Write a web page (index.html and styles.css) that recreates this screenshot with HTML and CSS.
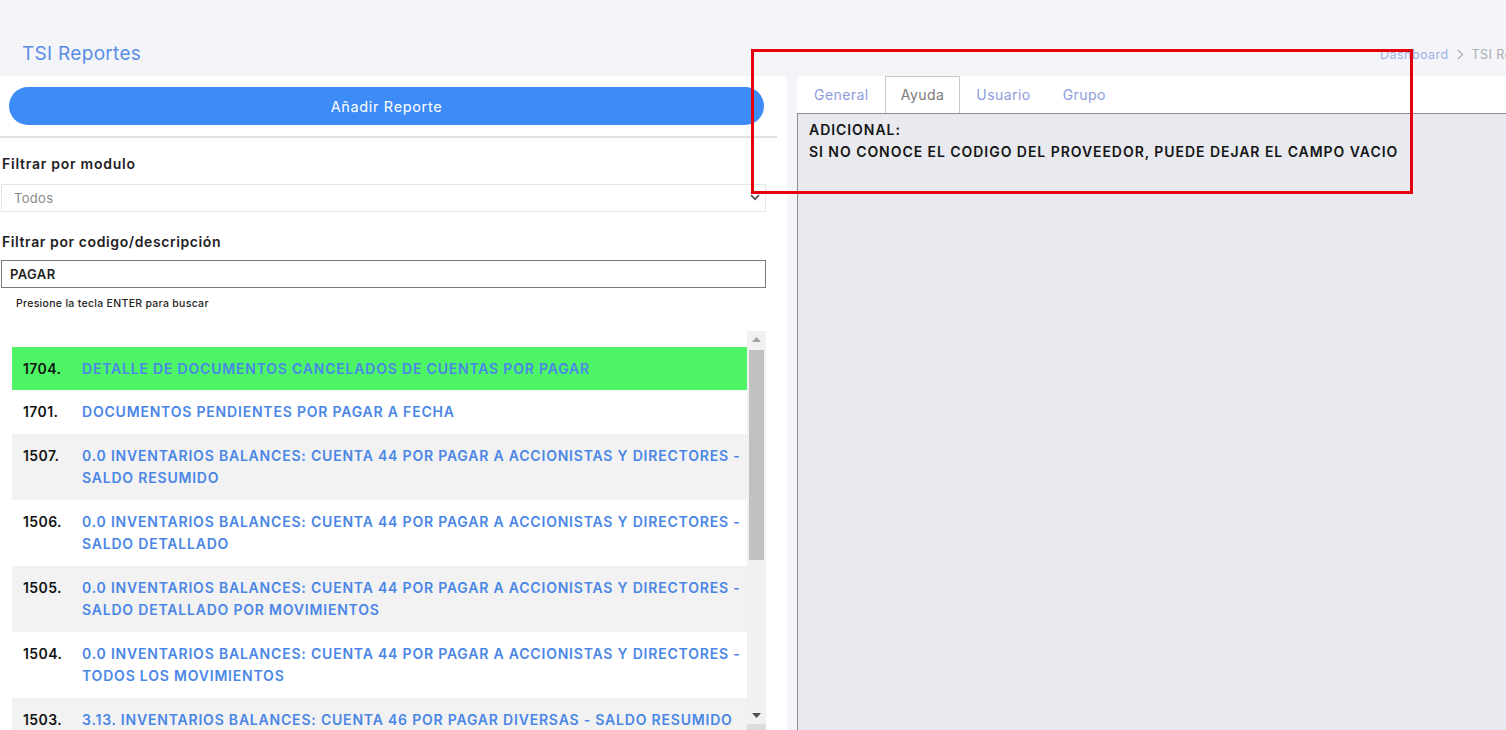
FILE: index.html
```html
<!DOCTYPE html>
<html lang="es">
<head>
<meta charset="utf-8">
<title>TSI Reportes</title>
<link rel="stylesheet" href="styles.css">
</head>
<body>
<div class="page">
  <header class="topbar">
    <h1 class="title">TSI Reportes</h1>
    <nav class="crumbs">
      <a class="crumb-link">Dashboard</a>
      <svg class="crumb-sep" width="7" height="11" viewBox="0 0 7 11"><path d="M1 1l4.5 4.5L1 10" fill="none" stroke="#a9abb3" stroke-width="1.2"/></svg>
      <span class="crumb-current">TSI Reportes</span>
    </nav>
  </header>
  <main class="main">
    <section class="left">
      <button class="add-btn" type="button">Añadir Reporte</button>
      <hr class="divider">
      <label class="field-label">Filtrar por modulo</label>
      <div class="select-wrap">
        <select class="select"><option>Todos</option></select>
        <svg class="chev" width="10" height="7" viewBox="0 0 10 7"><path d="M1 1.2l4 4 4-4" fill="none" stroke="#555" stroke-width="1.8"/></svg>
      </div>
      <label class="field-label field-label-2">Filtrar por codigo/descripción</label>
      <input class="search" type="text" value="PAGAR">
      <p class="hint">Presione la tecla ENTER para buscar</p>
      <div class="list-box">
        <ul class="list">
          <li class="item item-active"><span class="num">1704.</span><span class="name">DETALLE DE DOCUMENTOS CANCELADOS DE CUENTAS POR PAGAR</span></li>
          <li class="item"><span class="num">1701.</span><span class="name">DOCUMENTOS PENDIENTES POR PAGAR A FECHA</span></li>
          <li class="item item-alt"><span class="num">1507.</span><span class="name">0.0 INVENTARIOS BALANCES: CUENTA 44 POR PAGAR A ACCIONISTAS Y DIRECTORES - SALDO RESUMIDO</span></li>
          <li class="item"><span class="num">1506.</span><span class="name">0.0 INVENTARIOS BALANCES: CUENTA 44 POR PAGAR A ACCIONISTAS Y DIRECTORES - SALDO DETALLADO</span></li>
          <li class="item item-alt"><span class="num">1505.</span><span class="name">0.0 INVENTARIOS BALANCES: CUENTA 44 POR PAGAR A ACCIONISTAS Y DIRECTORES - SALDO DETALLADO POR MOVIMIENTOS</span></li>
          <li class="item"><span class="num">1504.</span><span class="name">0.0 INVENTARIOS BALANCES: CUENTA 44 POR PAGAR A ACCIONISTAS Y DIRECTORES - TODOS LOS MOVIMIENTOS</span></li>
          <li class="item item-alt"><span class="num">1503.</span><span class="name">3.13. INVENTARIOS BALANCES: CUENTA 46 POR PAGAR DIVERSAS - SALDO RESUMIDO</span></li>
        </ul>
        <div class="vscroll">
          <div class="vs-btn"><svg width="9" height="5" viewBox="0 0 9 5"><path d="M0 5L4.5 0 9 5z" fill="#a3a3a3"/></svg></div>
          <div class="vs-thumb"></div>
          <div class="vs-track"></div>
          <div class="vs-btn"><svg width="9" height="5" viewBox="0 0 9 5"><path d="M0 0h9L4.5 5z" fill="#505050"/></svg></div>
          <div class="vs-corner"></div>
        </div>
      </div>
    </section>
    <section class="right">
      <div class="tabs">
        <span class="tab">General</span>
        <span class="tab tab-active">Ayuda</span>
        <span class="tab">Usuario</span>
        <span class="tab">Grupo</span>
      </div>
      <div class="pane">
        <p class="pane-line">ADICIONAL:</p>
        <p class="pane-line">SI NO CONOCE EL CODIGO DEL PROVEEDOR, PUEDE DEJAR EL CAMPO VACIO</p>
      </div>
    </section>
  </main>
  <div class="annotation"></div>
</div>
</body>
</html>
```

FILE: styles.css
```css
html, body {
  margin: 0;
  padding: 0;
  height: 730px;
  overflow: hidden;
  background: #f4f5f9;
  font-family: Inter, "Open Sans", "Liberation Sans", sans-serif;
}

.page {
  position: relative;
  width: 1575px;
  height: 730px;
  display: flex;
  flex-direction: column;
}

.topbar {
  height: 76px;
  box-sizing: border-box;
  padding: 43px 22px 0 22px;
  display: flex;
  align-items: flex-start;
  flex-shrink: 0;
}

.title {
  margin: 0;
  font-size: 19px;
  font-weight: 400;
  line-height: 22px;
  letter-spacing: 0.3px;
  color: #5a8de6;
  flex: 1;
}

.crumbs {
  display: flex;
  align-items: center;
  gap: 8px;
  height: 22px;
  font-size: 12.5px;
  letter-spacing: 0.45px;
  color: #a9abb3;
}

.crumb-link {
  color: #9eaee6;
}

.main {
  flex: 1;
  display: flex;
  gap: 10px;
  min-height: 0;
}

.left {
  width: 787px;
  flex-shrink: 0;
  background: #fff;
  border-radius: 0 6px 0 0;
  padding-top: 11px;
  box-sizing: border-box;
  display: flex;
  flex-direction: column;
}

.add-btn {
  margin: 0 0 0 9px;
  width: 755px;
  height: 38px;
  border: none;
  border-radius: 19px;
  background: #3d8bf6;
  color: #fff;
  font-family: inherit;
  font-size: 14.5px;
  font-weight: 400;
  letter-spacing: 0.65px;
}

.divider {
  margin: 11px 0 0 0;
  width: 777px;
  height: 2px;
  border: none;
  background: #e0e1e3;
}

.field-label {
  display: block;
  margin: 16px 0 0 2px;
  font-size: 14px;
  font-weight: 600;
  line-height: 20px;
  letter-spacing: 0.75px;
  color: #1f2125;
}

.field-label-2 {
  margin-top: 20px;
  letter-spacing: 0.6px;
}

.select-wrap {
  position: relative;
  margin: 10px 0 0 1px;
  width: 765px;
}

.select {
  appearance: none;
  -webkit-appearance: none;
  display: block;
  width: 100%;
  height: 28px;
  box-sizing: border-box;
  border: 1px solid #e6e6e6;
  border-radius: 0;
  background: #fff;
  padding: 0 12px;
  font-family: inherit;
  font-size: 13px;
  letter-spacing: 0.3px;
  color: #8a8a8a;
}

.chev {
  position: absolute;
  right: 6px;
  top: 10px;
}

.search {
  display: block;
  margin: 8px 0 0 1px;
  width: 765px;
  height: 28px;
  box-sizing: border-box;
  border: 1px solid #7a7a7a;
  border-radius: 0;
  padding: 0 8px;
  font-family: inherit;
  font-size: 13px;
  font-weight: 600;
  letter-spacing: 0.4px;
  color: #1f1f1f;
}

.hint {
  margin: 9px 0 0 16px;
  font-size: 10.5px;
  line-height: 14px;
  font-weight: 500;
  letter-spacing: 0.3px;
  color: #222;
}

.list-box {
  margin-top: 20px;
  width: 766px;
  height: 399px;
  display: flex;
  overflow: hidden;
}

.list {
  list-style: none;
  margin: 0;
  padding: 16px 0 0 12px;
  flex: 1;
}

.item {
  display: grid;
  grid-template-columns: 59px 1fr;
  padding: 11px 4px 11px 11px;
  line-height: 22px;
  font-size: 14px;
  font-weight: 600;
  background: #fff;
}

.item-active {
  background: #4df566;
  padding-bottom: 10px;
}

.item-alt {
  background: #f2f2f2;
}

.num {
  color: #141414;
  letter-spacing: 0.4px;
}

.name {
  color: #4a86e6;
  letter-spacing: 0.8px;
}

.vscroll {
  width: 19px;
  display: flex;
  flex-direction: column;
  background: #f1f1f1;
}

.vs-btn {
  height: 17px;
  display: flex;
  align-items: center;
  justify-content: center;
  flex-shrink: 0;
}

.vs-thumb {
  margin: 2px 2px 0 2px;
  height: 210px;
  background: #c1c1c1;
  flex-shrink: 0;
}

.vs-track {
  flex: 1;
}

.vs-corner {
  height: 6px;
  background: #dcdcdc;
  flex-shrink: 0;
}

.right {
  flex: 1;
  background: #fff;
  border-radius: 6px 0 0 0;
  display: flex;
  flex-direction: column;
}

.tabs {
  height: 38px;
  box-sizing: border-box;
  display: flex;
  padding-left: 1px;
  border-bottom: 1px solid #8d8d8d;
}

.tab {
  padding: 0 15px;
  line-height: 35px;
  font-size: 14px;
  letter-spacing: 0.45px;
  color: #8d9ce0;
  border: 1px solid transparent;
  border-bottom: none;
}

.tab-active {
  border-color: #c9c9c9;
  color: #7a7a7a;
  background: #fff;
}

.pane {
  flex: 1;
  background: #e8eaef;
  border-left: 1px solid #8d8d8d;
  padding: 5px 11px;
}

.pane-line {
  margin: 0;
  font-size: 14px;
  font-weight: 600;
  line-height: 22px;
  letter-spacing: 0.95px;
  color: #151515;
}

.annotation {
  position: absolute;
  left: 751px;
  top: 49px;
  width: 662px;
  height: 145px;
  box-sizing: border-box;
  border: 3px solid #e4000c;
  pointer-events: none;
}
```
